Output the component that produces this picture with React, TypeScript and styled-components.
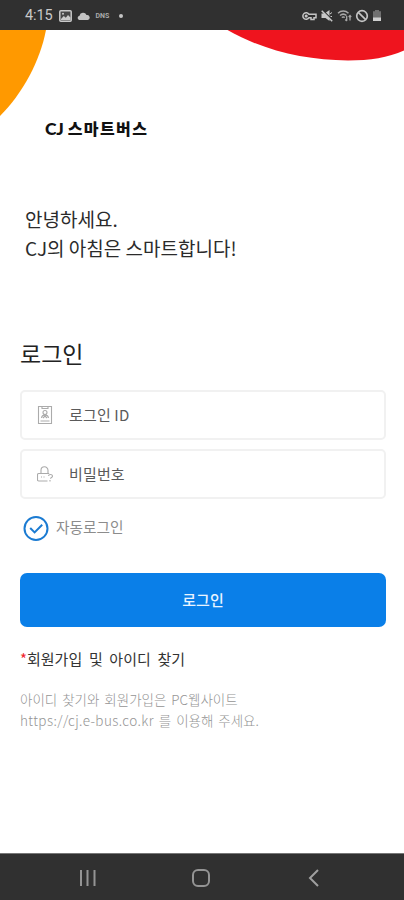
import React from 'react';
import styled, { createGlobalStyle } from 'styled-components';

const GlobalStyle = createGlobalStyle`
  *, *::before, *::after { box-sizing: border-box; }
  body { margin: 0; background: #fff; }
  button, input { font: inherit; }
`;

const Screen = styled.div`
  width: 404px;
  height: 900px;
  display: flex;
  flex-direction: column;
  overflow: hidden;
  background: #fff;
  font-family: 'Noto Sans CJK KR', 'Noto Sans', sans-serif;
`;

const StatusBar = styled.header`
  flex: none;
  height: 30px;
  padding: 1px 22px 0 25px;
  display: flex;
  align-items: center;
  justify-content: space-between;
  background: #303030;
  color: #c9c9c9;
`;

const StatusGroup = styled.div<{ $gap: number }>`
  display: flex;
  align-items: center;
  gap: ${(p) => p.$gap}px;
`;

const Clock = styled.span`
  width: 28px;
  padding-top: 1px;
  font: 400 14.5px/16px Roboto, sans-serif;
  letter-spacing: -0.1px;
`;

const Dns = styled.span`
  width: 14px;
  font: 700 7px/8px Roboto, sans-serif;
  color: #aaa;
`;

const Dot = styled.i`
  width: 4px;
  height: 4px;
  margin-left: 4px;
  border-radius: 50%;
  background: #c4c4c4;
`;

const Page = styled.main`
  position: relative;
  flex: 1;
  padding: 0 18px 0 20px;
  display: flex;
  flex-direction: column;
`;

const Backdrop = styled.svg`
  position: absolute;
  top: 0;
  left: 0;
`;

const Brand = styled.h1`
  margin: 87px 0 0 25px;
  display: flex;
  gap: 4px;
  font-size: 16px;
  line-height: 22px;
  font-weight: 900;
  letter-spacing: 1.4px;
  color: #111;
`;

const BrandMark = styled.span`
  padding-top: 1px;
  font-family: Lato, sans-serif;
  font-size: 17.5px;
  letter-spacing: -0.2px;
`;

const Greeting = styled.p`
  margin: 64px 0 0 5px;
  font-size: 19px;
  line-height: 29px;
  color: #2b2b2b;
`;

const Title = styled.h2`
  margin: 75px 0 0;
  font-size: 23px;
  line-height: 32px;
  font-weight: 400;
  color: #222;
`;

const Fields = styled.div`
  margin-top: 21px;
  display: grid;
  gap: 9px;
`;

const Field = styled.label`
  height: 50px;
  padding-left: 15px;
  display: flex;
  align-items: center;
  gap: 16px;
  border: 2px solid #f1f1f1;
  border-radius: 5px;
`;

const Input = styled.input`
  flex: 1;
  min-width: 0;
  padding: 0 0 2px;
  border: 0;
  outline: 0;
  background: transparent;
  font-size: 15px;
  letter-spacing: 0.15px;
  color: #555;
  &::placeholder { color: #5a5a5a; opacity: 1; }
`;

const Remember = styled.div`
  margin: 15px 0 0 3px;
  height: 28px;
  display: flex;
  gap: 7px;
  font-size: 14.7px;
  line-height: 26px;
  color: #8c8c8c;
`;

const Submit = styled.button`
  margin-top: 31px;
  height: 54px;
  padding: 0 0 2px;
  border: 0;
  border-radius: 7px;
  background: #0a7fe8;
  color: #e9f4ff;
  font-size: 15px;
  font-weight: 500;
`;

const FindAccount = styled.p`
  margin: 20px 0 0;
  font-size: 15px;
  line-height: 24px;
  word-spacing: 3.3px;
  color: #333;
`;

const Required = styled.span`
  color: #f0242c;
`;

const Help = styled.p`
  margin: 18px 0 0;
  font-size: 13.5px;
  line-height: 20.5px;
  font-weight: 300;
  word-spacing: 1.9px;
  color: #949494;
`;

const Address = styled.span`
  letter-spacing: 0.4px;
`;

const NavBar = styled.nav`
  flex: none;
  height: 47px;
  padding: 2px 80px 0 78px;
  display: flex;
  align-items: center;
  justify-content: space-between;
  border-top: 1px solid #777;
  background: #303030;
`;

const StatusIcons = () => (
  <StatusGroup $gap={3}>
    <svg width="15" height="12" viewBox="0 0 15 12" fill="none" stroke="#c4c4c4" strokeWidth="1.5">
      <path d="M7 4.300A3.300 3.300 0 1 0 7 7.700h2V9.500h3V7.700h2V4.300Z" />
      <circle cx="4.200" cy="6" r=".8" />
    </svg>
    <svg width="14" height="14" viewBox="0 0 14 14" fill="#c8c8c8">
      <path d="M1.500 4.500h3L9.500 1v11L5.500 9H1.500Z" />
      <path d="M2.500 1 13 11.500" stroke="#303030" strokeWidth="1.200" />
      <path d="M1.700 1.700 12.200 12.200" stroke="#c8c8c8" strokeWidth="1.500" />
      <path d="m10 5 2-1.500M10.500 7.500H12" stroke="#c8c8c8" />
    </svg>
    <svg width="15" height="13" viewBox="0 0 15 13" fill="none" stroke="#a8a8a8" strokeWidth="1.500">
      <path d="M1 4.200c3-2.800 7.500-2.800 10.500 0M3 6.500c2-1.700 4.500-1.700 6.500 0M4.800 8.500c1-.8 2-.8 3 0" />
      <path d="M9.700 7v5M8.300 10.500l1.400 1.500M13 6.500v5M11.700 8l1.300-1.500 1.200 1.500" strokeWidth="1.300" />
    </svg>
    <svg width="14" height="14" viewBox="0 0 14 14" fill="none" stroke="#c4c4c4" strokeWidth="1.700">
      <circle cx="7" cy="7" r="5.300" />
      <path d="m3.300 3.300 7.400 7.400" />
    </svg>
    <svg width="10" height="13" viewBox="0 0 10 13">
      <path d="M1 2.200h2V1h4v1.200h2V9H1Z" fill="#707070" />
      <path d="M1 8.500h8V12H1Z" fill="#cfcfcf" />
    </svg>
  </StatusGroup>
);

const PictureIcon = () => (
  <svg width="13" height="12" viewBox="0 0 13 12">
    <rect x=".8" y=".8" width="11.400" height="10.400" rx="1" fill="#464646" stroke="#c9c9c9" strokeWidth="1.500" />
    <path d="m2 9 2.800-3 2 1.700L9 5l2.500 2.500V10H2Z" fill="#c9c9c9" />
    <circle cx="4" cy="3.800" r="1" fill="#c9c9c9" />
  </svg>
);

const CloudIcon = () => (
  <svg width="13" height="8" viewBox="0 0 13 8" fill="#c4c4c4">
    <path d="M2.300 8a2.200 2.200 0 0 1 .2-4.300A3.700 3.700 0 0 1 9.500 3 2.500 2.500 0 0 1 10.700 8Z" />
  </svg>
);

const BadgeIcon = () => (
  <svg width="16" height="20" viewBox="0 0 16 20" fill="none" stroke="#ababab" strokeWidth="1.100">
    <path d="M5 1.500H1.500v17h13v-17H11M5 1.500v2h6v-2ZM3.500 16h9" />
    <circle cx="8" cy="7.500" r="2" />
    <path d="M4.500 13c.2-2 1.500-3 3.500-3s3.300 1 3.500 3M6 13l2-2 2 2" />
  </svg>
);

const LockIcon = () => (
  <svg width="16" height="18" viewBox="0 0 16 18" fill="none" stroke="#ababab" strokeWidth="1.100">
    <path d="M4 8V5.300a3.500 3.500 0 0 1 7 0V8M10.500 16H1.700q-1.200 0-1.200-1.200V9.700Q.5 8.500 1.700 8.500h10.500M4 12h1M6.500 12h1" />
    <path d="M11.500 11q.2-1.500 2-1.500t2 1.500q0 1-1.500 1.800l-.5 1M13 15v1.500" />
  </svg>
);

const CheckIcon = () => (
  <svg width="26" height="28" viewBox="0 0 26 28" fill="none" stroke="#1b7bd2" strokeWidth="2">
    <circle cx="13" cy="14.500" r="11.500" />
    <path d="m7.200 14 4.400 4.400 7.600-7.600" />
  </svg>
);

export default function App() {
  return (
    <Screen>
      <GlobalStyle />
      <StatusBar>
        <StatusGroup $gap={5.5}>
          <Clock>4:15</Clock>
          <PictureIcon />
          <CloudIcon />
          <Dns>DNS</Dns>
          <Dot />
        </StatusGroup>
        <StatusIcons />
      </StatusBar>
      <Page>
        <Backdrop width="404" height="90" viewBox="0 0 404 90">
          <path d="M0 0H46C40 31 23 63 0 86Z" fill="#ff9900" />
          <path d="M227.500 0C262 20 305 30.500 348 30.500C370 30.500 388 27.500 404 20.500V0Z" fill="#ef141e" />
        </Backdrop>
        <Brand>
          <BrandMark>CJ</BrandMark>
          <span>스마트버스</span>
        </Brand>
        <Greeting>
          안녕하세요.
          <br />
          CJ의 아침은 스마트합니다!
        </Greeting>
        <Title>로그인</Title>
        <Fields>
          <Field>
            <BadgeIcon />
            <Input placeholder="로그인 ID" />
          </Field>
          <Field>
            <LockIcon />
            <Input type="password" placeholder="비밀번호" />
          </Field>
        </Fields>
        <Remember>
          <CheckIcon />
          <span>자동로그인</span>
        </Remember>
        <Submit>로그인</Submit>
        <FindAccount>
          <Required>*</Required>회원가입 및 아이디 찾기
        </FindAccount>
        <Help>
          아이디 찾기와 회원가입은 PC웹사이트
          <br />
          <Address>https://cj.e-bus.co.kr</Address> 를 이용해 주세요.
        </Help>
      </Page>
      <NavBar>
        <svg width="20" height="20" viewBox="0 0 20 20" stroke="#949494" strokeWidth="2">
          <path d="M3 2v16M9.500 2v16M16.500 2v16" />
        </svg>
        <svg width="20" height="20" viewBox="0 0 20 20" fill="none" stroke="#949494" strokeWidth="2">
          <rect x="2" y="2" width="16" height="16" rx="5" />
        </svg>
        <svg width="20" height="20" viewBox="0 0 20 20" fill="none" stroke="#a0a0a0" strokeWidth="2">
          <path d="m14 2-8 8 8 8" />
        </svg>
      </NavBar>
    </Screen>
  );
}
